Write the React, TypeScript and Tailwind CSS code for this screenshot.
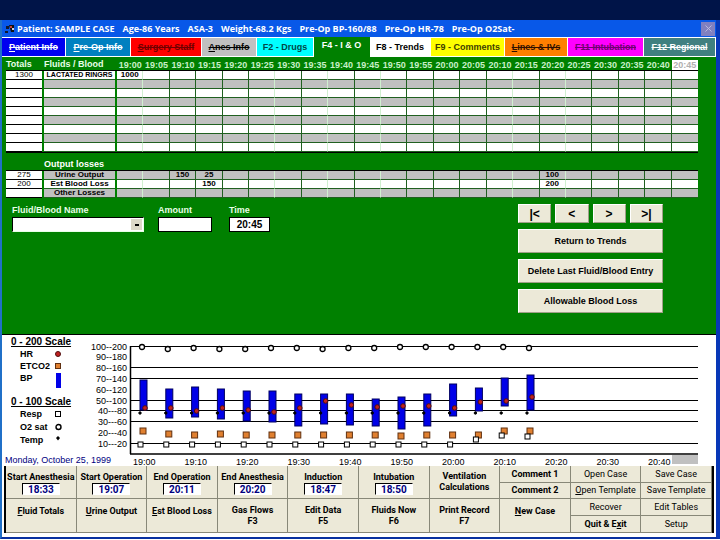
import { ReactNode } from 'react';
import { X } from 'lucide-react';

const headerItems = [
  'Patient: SAMPLE CASE',
  'Age-86 Years',
  'ASA-3',
  'Weight-68.2 Kgs',
  'Pre-Op BP-160/88',
  'Pre-Op HR-78',
  'Pre-Op O2Sat-',
];

const tabs = [
  { key: 'P', label: 'atient Info', style: 'border-white bg-[#0000f0] text-white line-through' },
  { key: 'P', label: 're-Op Info', style: 'border-white bg-[#0080c0] text-white line-through' },
  { key: 'S', label: 'urgery Staff', style: 'border-white bg-[#ff0000] text-[#700000] line-through' },
  { key: 'A', label: 'nes Info', style: 'border-white bg-[#c0c0c0] text-black line-through' },
  { key: '', label: 'F2 - Drugs', style: 'border-white bg-[#00ffff] text-[#004848]' },
  { key: '', label: 'F4 - I & O', style: 'border-[#008000] bg-[#008000] text-white pb-1' },
  { key: '', label: 'F8 - Trends', style: 'border-white bg-white text-black' },
  { key: '', label: 'F9 - Comments', style: 'border-white bg-[#ffff00] text-[#404000]' },
  { key: 'L', label: 'ines & IVs', style: 'border-white bg-[#ff8000] text-[#301000] line-through' },
  { key: '', label: 'F11 Intubation', style: 'border-white bg-[#ff00ff] text-[#700070] line-through' },
  { key: '', label: 'F12 Regional', style: 'border-white bg-[#408080] text-white line-through' },
];

const times = [
  '19:00', '19:05', '19:10', '19:15', '19:20', '19:25', '19:30', '19:35', '19:40', '19:45', '19:50',
  '19:55', '20:00', '20:05', '20:10', '20:15', '20:20', '20:25', '20:30', '20:35', '20:40', '20:45',
];

// columns whose right hand rule is drawn faint
const faint = [0, 5, 7, 9, 14, 16];

type Row = { total?: string; name?: string; values?: Record<number, string> };

const fluids: Row[] = [
  { total: '1300', name: 'LACTATED RINGRS', values: { 0: '1000' } },
  {}, {}, {}, {}, {}, {}, {}, {},
];

const losses: Row[] = [
  { total: '275', name: 'Urine Output', values: { 2: '150', 3: '25', 16: '100' } },
  { total: '200', name: 'Est Blood Loss', values: { 3: '150', 16: '200' } },
  { name: 'Other Losses' },
];

const GridRow = ({ row, gray, nameStyle }: { row: Row; gray: boolean; nameStyle: string }) => {
  const bg = gray ? 'bg-[#c0c0c0]' : 'bg-white';
  return (
    <tr className="h-[9px] text-[8px] leading-[8px]">
      <td className="h-[9px] border-b border-black bg-white p-0 text-center">{row.total}</td>
      <td />
      <td className={`whitespace-nowrap border-b border-[#206020] p-0 text-center font-bold ${nameStyle} ${bg}`}>{row.name}</td>
      <td />
      {times.map((t, i) => (
        <td
          key={t}
          className={`border-b border-b-[#206020] p-0 text-center font-bold ${bg} ${
            i === 21 ? '' : faint.includes(i) ? 'border-r border-r-[#d0f0d0]' : 'border-r border-r-[#206020]'
          }`}
        >
          {row.values?.[i]}
        </td>
      ))}
    </tr>
  );
};

const FluidGrid = () => (
  <table className="w-full table-fixed border-separate border-spacing-0">
    <colgroup>
      <col className="w-[36px]" />
      <col className="w-[2px]" />
      <col className="w-[71px]" />
      <col className="w-[2px]" />
      {times.map((t) => <col key={t} />)}
    </colgroup>
    <thead>
      <tr className="h-[14px] text-left text-[9px] leading-[12px] text-[#e8ffe8]">
        <th className="border-b border-black p-0">Totals</th>
        <th className="border-b border-black p-0" />
        <th className="whitespace-nowrap border-b border-black p-0">Fluids / Blood</th>
        <th className="border-b border-black p-0" />
        {times.map((t, i) => (
          <th key={t} className={`border-b border-black p-0 pt-[3px] text-center leading-[10px] ${i === 21 ? '' : 'text-[#c8f0c8]'}`}>
            <span className={i === 21 ? 'block bg-white text-[#b0b0b0]' : ''}>{t}</span>
          </th>
        ))}
      </tr>
    </thead>
    <tbody>
      {fluids.map((row, i) => <GridRow key={i} row={row} gray={i % 2 === 1} nameStyle="text-[7px]" />)}
      <tr>
        <td className="border-y border-black p-0" />
        <td className="border-y border-black p-0" />
        <th colSpan={24} className="h-[19px] border-y border-black p-0 pt-[6px] text-left text-[9px] leading-[11px] text-white">
          Output losses
        </th>
      </tr>
      {losses.map((row, i) => <GridRow key={i} row={row} gray={i % 2 === 0} nameStyle="text-[8px]" />)}
    </tbody>
  </table>
);

const Button = ({ children, className }: { children: ReactNode; className: string }) => (
  <button className={`border border-b-[#a0a088] border-l-white border-r-[#a0a088] border-t-white bg-[#ece9d8] font-bold leading-[12px] text-black ${className}`}>
    {children}
  </button>
);

const EntryForm = () => (
  <div className="flex items-start justify-between pl-[10px] pr-[53px] pt-[6px] text-[9px]">
    <div className="flex font-bold leading-[13px] text-[#e8ffe8]">
      <div className="w-[146px]">
        <label htmlFor="fluid">Fluid/Blood Name</label>
        <div className="relative w-[132px]">
          <select id="fluid" className="block h-[15px] w-full appearance-none border border-l-black border-t-black bg-white" />
          <span className="pointer-events-none absolute right-[2px] top-[2px] flex h-[11px] w-[11px] items-center justify-center bg-[#dcd8c8]">
            <span className="h-[2px] w-[4px] bg-black" />
          </span>
        </div>
      </div>
      <div className="w-[71px]">
        <label htmlFor="amount">Amount</label>
        <input id="amount" className="block h-[15px] w-[54px] border border-l-black border-t-black bg-white px-1 text-black" />
      </div>
      <div>
        <label htmlFor="time">Time</label>
        <input id="time" defaultValue="20:45" className="block h-[15px] w-[41px] border border-l-black border-t-black bg-white text-center text-[10px] text-black" />
      </div>
    </div>
    <div className="flex w-[145px] flex-col gap-[6px]">
      <div className="grid grid-cols-4 gap-1">
        {['|<', '<', '>', '>|'].map((s) => <Button key={s} className="h-[19px] text-[12px]">{s}</Button>)}
      </div>
      <Button className="h-[24px]">Return to Trends</Button>
      <Button className="h-[24px]">Delete Last Fluid/Blood Entry</Button>
      <Button className="h-[24px]">Allowable Blood Loss</Button>
    </div>
  </div>
);

// one entry per five minutes: pressure bar top/bottom, heart rate, O2 sat, ETCO2, resp
const readings = [
  [45, 75, 73, 12, 93, 110], [54, 83, 73, 14, 96, 110], [52, 82, 76, 13, 97, 110], [54, 84, 73, 14, 96, 110],
  [56, 86, 75, 14, 97, 110], [56, 87, 77, 13, 97, 110], [59, 91, 73, 13, 97, 110], [59, 89, 66, 14, 97, 110],
  [59, 90, 70, 13, 97, 110], [64, 91, 72, 13, 97, 110], [62, 94, 71, 12, 98, 110], [59, 91, 71, 12, 97, 110],
  [49, 81, 73, 12, 97, 110], [53, 76, 67, 12, 97, 105], [43, 71, 66, 12, 93, 101], [40, 75, 62, 13, 93, 102],
];

const scale = ['100--200', '90--180', '80--160', '70--140', '60--120', '50--100', '40---80', '30---60', '20---40', '10---20'];
const rules = [11, 32, 43, 65, 75, 86, 108];
const hours = ['19:00', '19:10', '19:20', '19:30', '19:40', '19:50', '20:00', '20:10', '20:20', '20:30', '20:40'];

const Chart = () => (
  <svg viewBox="0 0 626 131" className="min-w-0 flex-1 font-['Liberation_Sans']">
    {scale.map((s, i) => (
      <text key={s} x={37} y={14.5 + i * 10.8} fontSize={9} textAnchor="end">{s}</text>
    ))}
    {rules.map((y) => <path key={y} d={`M40 ${y + 0.5}H608`} stroke="#000" />)}
    <path d="M40.5 11V119M40 119H608" stroke="#000" strokeWidth="1.5" fill="none" />
    <rect x={582} y={120} width={26} height={9} fill="#c0c0c0" />
    {hours.map((h, i) => (
      <text key={h} x={43 + i * 51.5} y={130} fontSize={9}>{h}</text>
    ))}
    {readings.map(([top, bottom, hr, sat, co2, resp], i) => {
      const x = 53 + i * 25.8;
      return (
        <g key={i} stroke="#000">
          <rect x={x - 3} y={top} width={7} height={bottom - top} fill="#0000e8" stroke="#000060" />
          <circle cx={x - 1} cy={sat} r={2.5} fill="#fff" strokeWidth="1.3" />
          <circle cx={x - 3} cy={78} r={1.2} fill="#000" />
          <circle cx={x + 2} cy={hr} r={2.3} fill="#c02020" stroke="#501010" />
          <rect x={x - 3} y={co2} width={6} height={6} fill="#e08030" stroke="#603010" />
          <rect x={x - 5} y={resp - 3} width={5} height={5} fill="#fff" />
        </g>
      );
    })}
  </svg>
);

const LegendRow = ({ label, children }: { label: string; children: ReactNode }) => (
  <div className="flex h-[12px] items-center pl-[9px] text-[9px]">
    <span className="w-[34px]">{label}</span>
    <svg viewBox="0 0 8 8" className="h-2 w-2 overflow-visible">{children}</svg>
  </div>
);

const Legend = () => (
  <div className="flex w-[88px] shrink-0 flex-col text-[10px] font-bold leading-[12px]">
    <div className="pl-[9px] pt-px">
      <div className="underline">0 - 200 Scale</div>
      <LegendRow label="HR"><circle cx="4" cy="4" r="2.5" fill="#c02020" stroke="#501010" /></LegendRow>
      <LegendRow label="ETCO2"><rect x="1.5" y="1.5" width="5" height="5" fill="#e08030" stroke="#603010" /></LegendRow>
      <LegendRow label="BP"><rect x="2" y="-1" width="5" height="15" fill="#0000e8" /></LegendRow>
      <div className="pt-[12px] underline">0 - 100 Scale</div>
      <div className="flex flex-col gap-px">
        <LegendRow label="Resp"><rect x="1.5" y="1.5" width="5" height="5" fill="#fff" stroke="#000" /></LegendRow>
        <LegendRow label="O2 sat"><circle cx="4.5" cy="4" r="2.5" fill="#fff" stroke="#000" strokeWidth="1.4" /></LegendRow>
        <LegendRow label="Temp"><path d="M4 0L6 2 4 4.5 2 2z" /></LegendRow>
      </div>
    </div>
    <div className="mt-auto whitespace-nowrap pl-[3px] text-[9px] font-normal text-[#000080]">Monday, October 25, 1999</div>
  </div>
);

const TimeBox = ({ label, value }: { label: string; value: string }) => (
  <label className="flex flex-col items-center border-b border-r border-[#888878] pt-[6px]">
    <span className="whitespace-nowrap">{label}</span>
    <input defaultValue={value} className="block h-[12px] w-[38px] border border-b-white border-l-black border-r-white border-t-black bg-white text-center text-[10px] text-[#000080]" />
  </label>
);

const Cell = ({ children, className = '' }: { children: ReactNode; className?: string }) => (
  <button className={`whitespace-nowrap border-b border-r border-[#888878] ${className}`}>{children}</button>
);

const Footer = () => (
  <div className="mx-[2px] mb-[4px] grid grid-cols-10 grid-rows-[17px_16px_17px_17px] border-l-2 border-r-2 border-black bg-[#ece9d8] font-['Roboto'] text-[9px] font-bold leading-[11px] [&>*]:min-w-0 [&>label]:row-span-2">
    <TimeBox label="Start Anesthesia" value="18:33" />
    <TimeBox label="Start Operation" value="19:07" />
    <TimeBox label="End Operation" value="20:11" />
    <TimeBox label="End Anesthesia" value="20:20" />
    <TimeBox label="Induction" value="18:47" />
    <TimeBox label="Intubation" value="18:50" />
    <Cell className="row-span-2">Ventilation<br />Calculations</Cell>
    <Cell>Comment 1</Cell>
    <Cell className="font-normal">Open Case</Cell>
    <Cell className="font-normal">Save Case</Cell>
    <Cell>Comment 2</Cell>
    <Cell className="font-normal"><u>O</u>pen Template</Cell>
    <Cell className="font-normal">Save Template</Cell>
    <Cell className="row-span-2 pb-[9px]"><u>F</u>luid Totals</Cell>
    <Cell className="row-span-2 pb-[9px]"><u>U</u>rine Output</Cell>
    <Cell className="row-span-2 pb-[9px]"><u>E</u>st Blood Loss</Cell>
    <Cell className="row-span-2">Gas Flows<br />F3</Cell>
    <Cell className="row-span-2">Edit Data<br />F5</Cell>
    <Cell className="row-span-2">Fluids Now<br />F6</Cell>
    <Cell className="row-span-2">Print Record<br />F7</Cell>
    <Cell className="row-span-2 pb-[9px]"><u>N</u>ew Case</Cell>
    <Cell className="font-normal">Recover</Cell>
    <Cell className="font-normal">Edit Tables</Cell>
    <Cell>Quit &amp; E<u>x</u>it</Cell>
    <Cell className="font-normal">Setup</Cell>
  </div>
);

const App = () => {
  return (
    <div className="bg-[#001448] pt-5 font-['Liberation_Sans',sans-serif] text-black">
      <div className="border-b-2 border-l-2 border-r-4 border-b-[#0830a0] border-l-[#2070c8] border-r-[#0838b8] bg-white">
        {/* Title bar */}
        <header className="flex h-[17px] items-center gap-[8px] bg-[#0858e8] pl-[3px] font-['Open_Sans'] text-[9px] font-bold leading-[14px] text-white">
          <svg viewBox="0 0 10 10" className="-mr-[6px] h-[10px] w-[10px] shrink-0">
            <path d="M1 2h3v3H1zM0 7h3v2H0z" fill="#101830" />
            <path d="M4 1h5v7H6z" fill="#101010" />
            <path d="M5 2h2v2H5z" fill="#c04040" />
            <path d="M7 4h2v2H7z" fill="#d0d0e0" />
          </svg>
          {headerItems.map((item) => <span key={item} className="whitespace-nowrap">{item}</span>)}
          <button aria-label="Close" className="ml-auto mr-px flex h-[14px] w-[14px] items-center justify-center bg-[#8080c0] text-[#c0c0e0]">
            <X size={11} />
          </button>
        </header>

        {/* Tabs */}
        <nav className="grid h-[20px] grid-cols-[64fr_65fr_71fr_55fr_57fr_56fr_61fr_74fr_63fr_76fr_72fr] bg-[#008000] text-[9px] font-bold leading-[11px]">
          {tabs.map((tab) => (
            <button key={tab.label} className={`min-w-0 whitespace-nowrap border-y border-r ${tab.style}`}>
              {tab.key && <u className="decoration-from-font">{tab.key}</u>}
              {tab.label}
            </button>
          ))}
        </nav>

        <main className="bg-[#008000] pb-[21px]">
          <div className="pl-[4px] pr-[18px]">
            <FluidGrid />
          </div>
          <EntryForm />
        </main>

        <section className="flex border-t border-black bg-white">
          <Legend />
          <Chart />
        </section>

        <Footer />
      </div>
    </div>
  );
};

export default App;
